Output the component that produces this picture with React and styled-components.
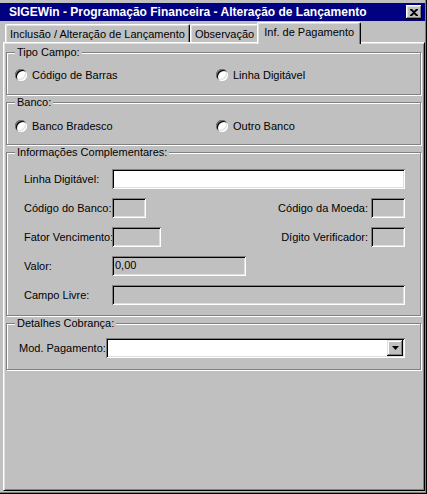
import React from 'react';
import styled, { createGlobalStyle } from 'styled-components';

const GlobalStyle = createGlobalStyle`
  html, body {
    margin: 0;
    padding: 0;
    background: #c0c0c0;
  }
  body {
    font-family: "Liberation Sans", Arial, sans-serif;
    font-size: 11px;
    color: #000;
  }
`;

const S_Window = styled.div`
  width: 427px;
  height: 494px;
  box-sizing: border-box;
  padding: 3px 2px 2px 0;
  display: flex;
  flex-direction: column;
  background: #c0c0c0;
  box-shadow: inset -1px -1px 0 #000, inset -2px -2px 0 #808080;
`;

const S_TitleBar = styled.div`
  height: 18px;
  flex-shrink: 0;
  background: #000080;
  color: #fff;
  display: flex;
  align-items: center;
  justify-content: space-between;
  padding: 0 3px 0 9px;
  font-weight: bold;
  font-size: 12px;
`;

const S_CloseButton = styled.div`
  width: 16px;
  height: 14px;
  box-sizing: border-box;
  background: #c0c0c0;
  display: flex;
  align-items: center;
  justify-content: center;
  box-shadow: inset -1px -1px 0 #000, inset 1px 1px 0 #fff, inset -2px -2px 0 #808080, inset 2px 2px 0 #dfdfdf;
`;

const S_TabRow = styled.div`
  height: 21px;
  flex-shrink: 0;
  display: flex;
  align-items: flex-end;
  padding-left: 5px;
`;

const S_Tab = styled.div`
  box-sizing: border-box;
  height: ${p => (p.active ? '22px' : '18px')};
  margin: ${p => (p.active ? '0 -2px -2px -2px' : '0')};
  padding: ${p => (p.active ? '3px 6px 0' : '0 4px')};
  position: ${p => (p.active ? 'relative' : 'static')};
  z-index: ${p => (p.active ? 1 : 0)};
  background: #c0c0c0;
  display: flex;
  align-items: ${p => (p.active ? 'flex-start' : 'center')};
  border-top: 1px solid #fff;
  border-left: 1px solid #fff;
  border-right: 1px solid #000;
  border-top-left-radius: 2px;
  border-top-right-radius: 2px;
  box-shadow: inset -1px 0 0 #808080, inset 1px 1px 0 #dfdfdf;
  white-space: nowrap;
`;

const S_Panel = styled.div`
  flex: 1;
  margin: 0 0 1px 3px;
  padding: 2px 3px 0 2px;
  box-sizing: border-box;
  display: flex;
  flex-direction: column;
  background: #c0c0c0;
  border-top: 1px solid #fff;
  border-left: 1px solid #fff;
  border-right: 1px solid #000;
  border-bottom: 1px solid #000;
  box-shadow: inset 1px 1px 0 #dfdfdf, inset -1px -1px 0 #808080;
`;

const S_Group = styled.div`
  margin-top: ${p => p.top}px;
  border: 1px solid #808080;
  box-shadow: 1px 1px 0 #fff, inset 1px 1px 0 #fff;
  display: flex;
  flex-direction: column;
  padding: 0 15px ${p => p.bottom}px ${p => p.left}px;
`;

const S_Legend = styled.div`
  align-self: flex-start;
  margin: -7px 0 0 ${p => 8 - p.left}px;
  padding: 0 2px;
  line-height: 13px;
  background: #c0c0c0;
`;

const S_RadioRow = styled.div`
  margin-top: ${p => p.top}px;
  display: grid;
  grid-template-columns: 201px 1fr;
  height: 16px;
  align-items: center;
`;

const S_RadioItem = styled.label`
  display: flex;
  align-items: center;
  gap: 5px;
`;

const S_RadioDot = styled.span`
  width: 12px;
  height: 12px;
  border-radius: 50%;
  background: #fff;
  box-shadow: inset 1px 1px 0 #808080, inset -1px -1px 0 #fff, inset 2px 2px 0 #000, inset -2px -2px 0 #dfdfdf;
`;

const S_FieldRow = styled.div`
  margin-top: ${p => p.top}px;
  height: 20px;
  display: flex;
  align-items: center;
`;

const S_Label = styled.span`
  width: ${p => (p.width ? `${p.width}px` : 'auto')};
  flex-shrink: 0;
  white-space: nowrap;
`;

const S_RightLabel = styled.span`
  margin-left: auto;
  margin-right: 3px;
  white-space: nowrap;
`;

const S_Input = styled.div`
  box-sizing: border-box;
  height: 20px;
  width: ${p => (p.width ? `${p.width}px` : 'auto')};
  flex: ${p => (p.width ? '0 0 auto' : '1')};
  background: ${p => (p.white ? '#fff' : '#c0c0c0')};
  padding: 3px 3px 0;
  line-height: 13px;
  box-shadow: inset 1px 1px 0 #808080, inset -1px -1px 0 #fff, inset 2px 2px 0 #000, inset -2px -2px 0 #dfdfdf;
`;

const S_Combo = styled.div`
  flex: 1;
  box-sizing: border-box;
  height: 20px;
  background: #fff;
  display: flex;
  justify-content: flex-end;
  padding: 2px;
  box-shadow: inset 1px 1px 0 #808080, inset -1px -1px 0 #fff, inset 2px 2px 0 #000, inset -2px -2px 0 #dfdfdf;
`;

const S_ComboButton = styled.div`
  width: 16px;
  height: 16px;
  box-sizing: border-box;
  background: #c0c0c0;
  display: flex;
  align-items: center;
  justify-content: center;
  box-shadow: inset -1px -1px 0 #000, inset 1px 1px 0 #dfdfdf, inset -2px -2px 0 #808080, inset 2px 2px 0 #fff;
`;

const Radio = ({ children }) => (
  <S_RadioItem>
    <S_RadioDot />
    {children}
  </S_RadioItem>
);

const App = () => {
  return (
    <>
      <GlobalStyle />
      <S_Window>
        <S_TitleBar>
          <span>SIGEWin - Programação Financeira - Alteração de Lançamento</span>
          <S_CloseButton>
            <svg width="8" height="7" viewBox="0 0 8 7">
              <path d="M0 0h2l2 2 2-2h2v1L5 3.5 8 6v1H6L4 5 2 7H0V6l3-2.5L0 1z" fill="#000" />
            </svg>
          </S_CloseButton>
        </S_TitleBar>

        <S_TabRow>
          <S_Tab>Inclusão / Alteração de Lançamento</S_Tab>
          <S_Tab>Observação</S_Tab>
          <S_Tab active>Inf. de Pagamento</S_Tab>
        </S_TabRow>

        <S_Panel>
          <S_Group top={7} bottom={11} left={8}>
            <S_Legend left={8}>Tipo Campo:</S_Legend>
            <S_RadioRow top={8}>
              <Radio>Código de Barras</Radio>
              <Radio>Linha Digitável</Radio>
            </S_RadioRow>
          </S_Group>

          <S_Group top={7} bottom={10} left={8}>
            <S_Legend left={8}>Banco:</S_Legend>
            <S_RadioRow top={9}>
              <Radio>Banco Bradesco</Radio>
              <Radio>Outro Banco</Radio>
            </S_RadioRow>
          </S_Group>

          <S_Group top={7} bottom={10} left={17}>
            <S_Legend left={17}>Informações Complementares:</S_Legend>
            <S_FieldRow top={10}>
              <S_Label width={88}>Linha Digitável:</S_Label>
              <S_Input white />
            </S_FieldRow>
            <S_FieldRow top={9}>
              <S_Label width={88}>Código do Banco:</S_Label>
              <S_Input width={34} />
              <S_RightLabel>Código da Moeda:</S_RightLabel>
              <S_Input width={34} />
            </S_FieldRow>
            <S_FieldRow top={9}>
              <S_Label width={88}>Fator Vencimento:</S_Label>
              <S_Input width={49} />
              <S_RightLabel>Dígito Verificador:</S_RightLabel>
              <S_Input width={34} />
            </S_FieldRow>
            <S_FieldRow top={9}>
              <S_Label width={88}>Valor:</S_Label>
              <S_Input width={134}>0,00</S_Input>
            </S_FieldRow>
            <S_FieldRow top={9}>
              <S_Label width={88}>Campo Livre:</S_Label>
              <S_Input />
            </S_FieldRow>
          </S_Group>

          <S_Group top={7} bottom={11} left={12}>
            <S_Legend left={12}>Detalhes Cobrança:</S_Legend>
            <S_FieldRow top={8}>
              <S_Label>Mod. Pagamento:</S_Label>
              <S_Combo>
                <S_ComboButton>
                  <svg width="7" height="4" viewBox="0 0 7 4">
                    <path d="M0 0h7L3.5 4z" fill="#000" />
                  </svg>
                </S_ComboButton>
              </S_Combo>
            </S_FieldRow>
          </S_Group>
        </S_Panel>
      </S_Window>
    </>
  );
};

export default App;
